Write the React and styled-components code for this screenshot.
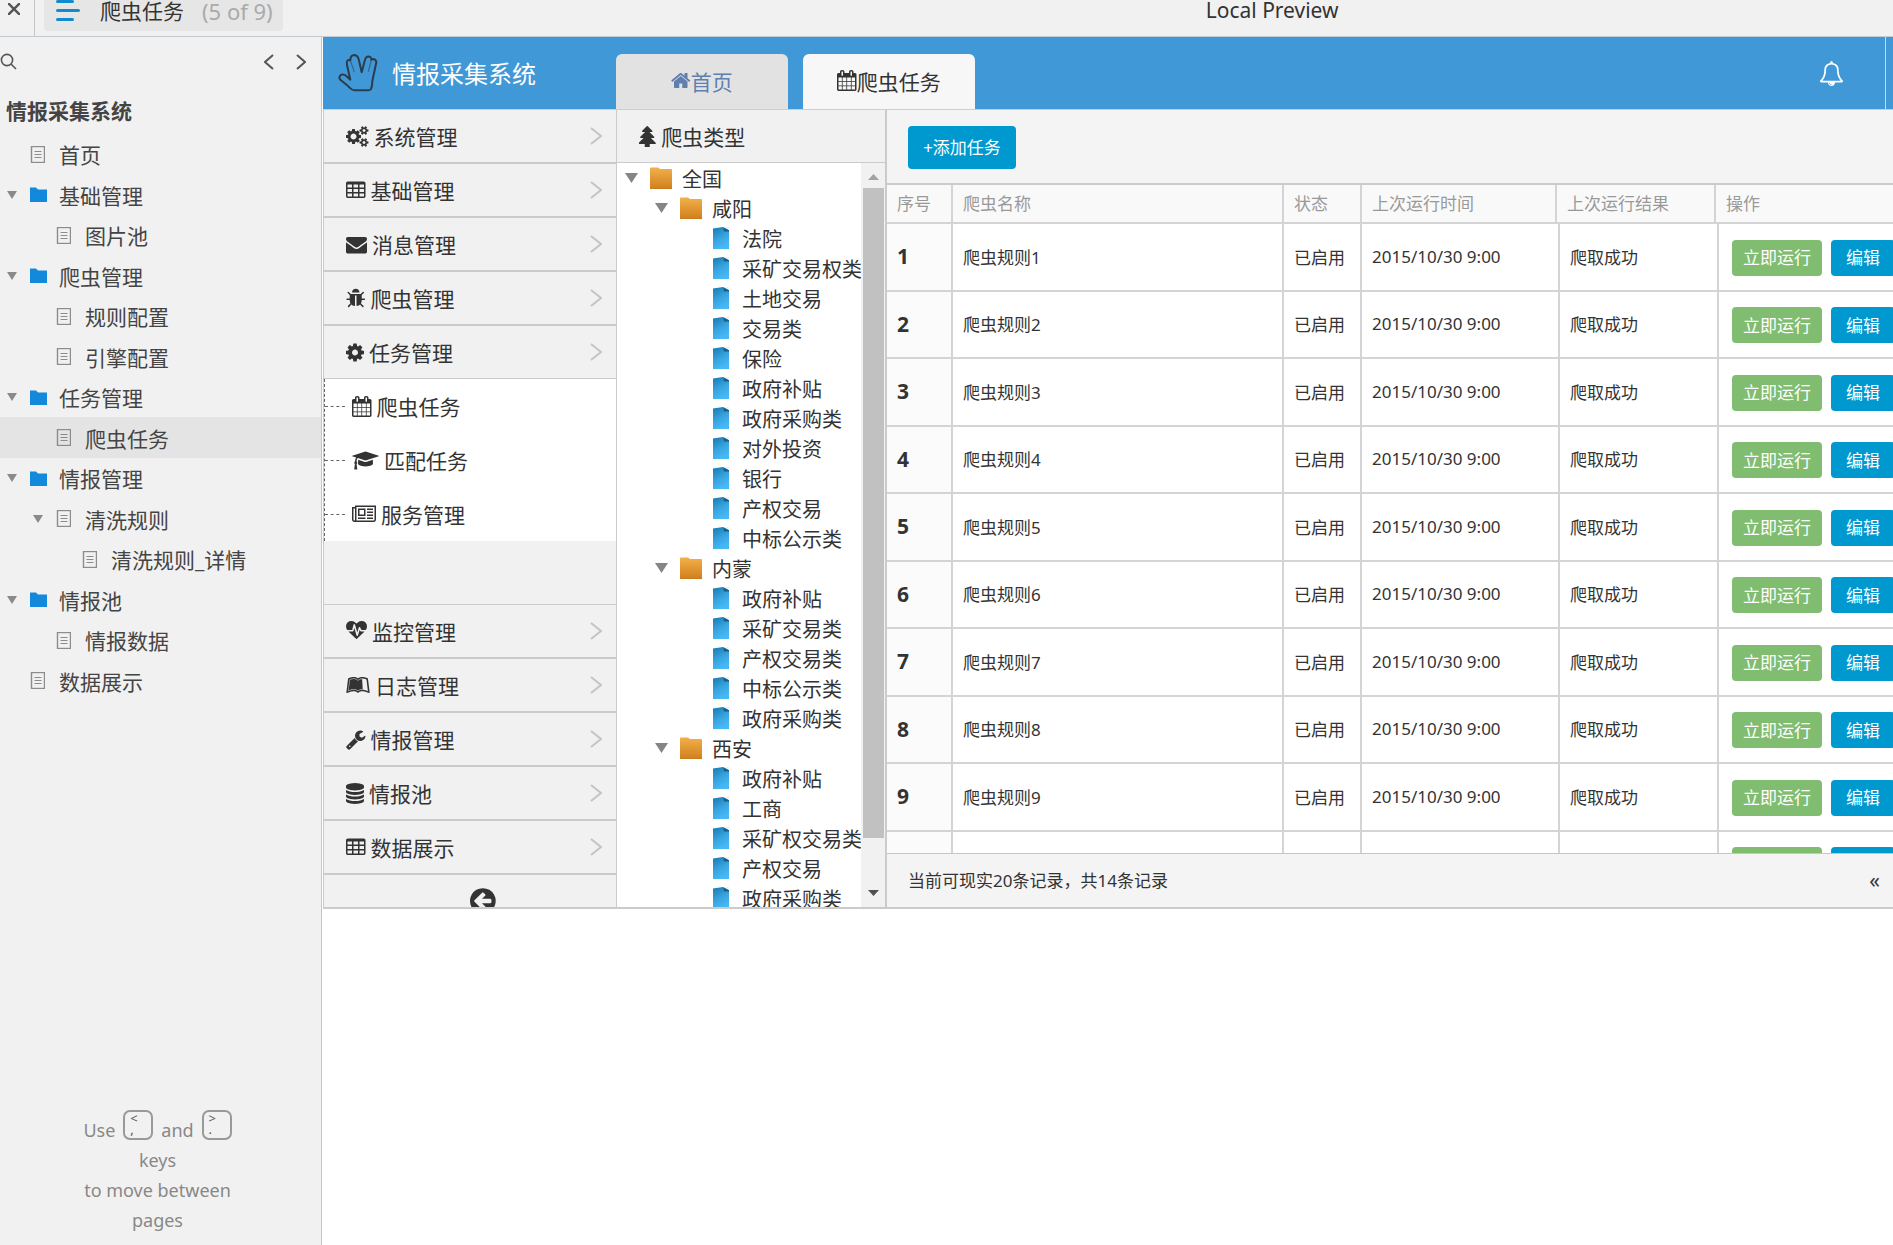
import React, { useState } from 'react';
import styled, { createGlobalStyle, css } from 'styled-components';
import { FaLeanpub } from 'react-icons/fa';

const COLORS = {
  blue: '#4098d7',
  button: '#0099cf',
  green: '#80bd70',
  panel: '#f1f1f1',
  line: '#cbcbcb',
  text: '#333333',
  muted: '#999999',
};

const cell = (x, y) => `M${x} ${y}v-192q0-14-9-23t-23-9h-320q-14 0-23 9t-9 23v192q0 14 9 23t23 9h320q14 0 23-9t9-23z`;
const gridCells = [576, 1088, 1600].map((x) => [608, 992, 1376].map((y) => cell(x, y)).join('')).join('');

// [min x, width, path], every glyph stands on an em of 1792 units
const GLYPHS = {
  cogs: [0, 1920, 'M896 896q0-106-75-181t-181-75-181 75-75 181 75 181 181 75 181-75 75-181zm768 512q0-52-38-90t-90-38-90 38-38 90q0 53 37.5 90.5t90.5 37.5 90.5-37.5 37.5-90.5zm0-1024q0-52-38-90t-90-38-90 38-38 90q0 53 37.5 90.5t90.5 37.5 90.5-37.5 37.5-90.5zm-384 421v185q0 10-7 19.5t-16 10.5l-155 24q-11 35-32 76 34 48 90 115 7 11 7 20 0 12-7 19-23 30-82.5 89.5t-78.5 59.5q-11 0-21-7l-115-90q-37 19-77 31-11 108-23 155-7 24-30 24h-186q-11 0-20-7.5t-10-17.5l-23-153q-34-10-75-31l-118 89q-7 7-20 7-11 0-21-8-144-133-144-160 0-9 7-19 10-14 41-53t47-61q-23-44-35-82l-152-24q-10-1-17-9.5t-7-19.5v-185q0-10 7-19.5t16-10.5l155-24q11-35 32-76-34-48-90-115-7-11-7-20 0-12 7-20 22-30 82-89t79-59q11 0 21 7l115 90q34-18 77-32 11-108 23-154 7-24 30-24h186q11 0 20 7.5t10 17.5l23 153q34 10 75 31l118-89q8-7 20-7 11 0 21 8 144 133 144 160 0 8-7 19-12 16-42 54t-45 60q23 48 34 82l152 23q10 2 17 10.5t7 19.5zm640 533v140q0 16-149 31-12 27-30 52 51 113 51 138 0 4-4 7-122 71-124 71-8 0-46-47t-52-68q-20 2-30 2t-30-2q-14 21-52 68t-46 47q-2 0-124-71-4-3-4-7 0-25 51-138-18-25-30-52-149-15-149-31v-140q0-16 149-31 13-29 30-52-51-113-51-138 0-4 4-7 4-2 35-20t59-34 30-16q8 0 46 46.5t52 67.5q20-2 30-2t30 2q51-71 92-112l6-2q4 0 124 70 4 3 4 7 0 25-51 138 17 23 30 52 149 15 149 31zm0-1024v140q0 16-149 31-12 27-30 52 51 113 51 138 0 4-4 7-122 71-124 71-8 0-46-47t-52-68q-20 2-30 2t-30-2q-14 21-52 68t-46 47q-2 0-124-71-4-3-4-7 0-25 51-138-18-25-30-52-149-15-149-31v-140q0-16 149-31 13-29 30-52-51-113-51-138 0-4 4-7 4-2 35-20t59-34 30-16q8 0 46 46.5t52 67.5q20-2 30-2t30 2q51-71 92-112l6-2q4 0 124 70 4 3 4 7 0 25-51 138 17 23 30 52 149 15 149 31z'],
  table: [64, 1664, `${gridCells}M1728 288v1088q0 66-47 113t-113 47h-1344q-66 0-113-47t-47-113v-1088q0-66 47-113t113-47h1344q66 0 113 47t47 113z`],
  envelope: [0, 1792, 'M1792 710v794q0 66-47 113t-113 47h-1472q-66 0-113-47t-47-113v-794q44 49 101 87 362 246 497 345 57 42 92.5 65.5t94.5 48 110 24.5h2q51 0 110-24.5t94.5-48 92.5-65.5q170-123 498-345 57-39 100-87zm0-294q0 79-49 151t-122 123q-376 261-468 325-10 7-42.5 31t-54 38.5-52 32.5-57.5 27-50 9h-2q-23 0-50-9t-57.5-27-52-32.5-54-38.5-42.5-31q-91-64-262-182.5t-205-142.5q-62-42-117-115.5t-55-136.5q0-78 41.5-130t118.5-52h1472q65 0 112.5 47t47.5 113z'],
  bug: [64, 1664, 'M1696 960q0 26-19 45t-45 19h-224q0 171-67 290l208 209q19 19 19 45t-19 45q-18 19-45 19t-45-19l-198-197q-5 5-15 13t-42 28.5-65 36.5-82 29-97 13v-896h-128v896q-51 0-101.5-13.5t-87-33-66-39-43.5-32.5l-15-14-183 207q-20 21-48 21-24 0-43-16-19-18-20.5-44.5t15.5-46.5l202-227q-58-114-58-274h-224q-26 0-45-19t-19-45 19-45 45-19h224v-294l-173-173q-19-19-19-45t19-45 45-19 45 19l173 173h844l173-173q19-19 45-19t45 19 19 45-19 45l-173 173v294h224q26 0 45 19t19 45zm-480-576h-640q0-133 93.5-226.5t226.5-93.5 226.5 93.5 93.5 226.5z'],
  cog: [128, 1536, 'M1152 896q0-106-75-181t-181-75-181 75-75 181 75 181 181 75 181-75 75-181zm512-109v222q0 12-8 23t-20 13l-185 28q-19 54-39 91 35 50 107 138 10 12 10 25t-9 23q-27 37-99 108t-94 71q-12 0-26-9l-138-108q-44 23-91 38-16 136-29 186-7 28-36 28h-222q-14 0-24.5-8.5t-11.5-21.5l-28-184q-49-16-90-37l-141 107q-10 9-25 9-14 0-25-11-126-114-165-168-7-10-7-23 0-12 8-23 15-21 51-66.5t54-70.5q-27-50-41-99l-183-27q-13-2-21-12.5t-8-23.5v-222q0-12 8-23t19-13l186-28q14-46 39-92-40-57-107-138-10-12-10-24 0-10 9-23 26-36 98.5-107.5t94.5-71.5q13 0 26 10l138 107q44-23 91-38 16-136 29-186 7-28 36-28h222q14 0 24.5 8.5t11.5 21.5l28 184q49 16 90 37l142-107q9-9 24-9 13 0 25 10 129 119 165 170 7 8 7 22 0 12-8 23-15 21-51 66.5t-54 70.5q26 50 41 98l183 28q13 2 21 12.5t8 23.5z'],
  calendar: [64, 1664, 'M192 1664h288v-288h-288v288zm352 0h320v-288h-320v288zm-352-352h288v-320h-288v320zm352 0h320v-320h-320v320zm-352-384h288v-288h-288v288zm736 736h320v-288h-320v288zm-384-736h320v-288h-320v288zm768 736h288v-288h-288v288zm-384-352h320v-320h-320v320zm-352-864v-288q0-13-9.5-22.5t-22.5-9.5h-64q-13 0-22.5 9.5t-9.5 22.5v288q0 13 9.5 22.5t22.5 9.5h64q13 0 22.5-9.5t9.5-22.5zm736 864h288v-320h-288v320zm-384-384h320v-288h-320v288zm384 0h288v-288h-288v288zm32-480v-288q0-13-9.5-22.5t-22.5-9.5h-64q-13 0-22.5 9.5t-9.5 22.5v288q0 13 9.5 22.5t22.5 9.5h64q13 0 22.5-9.5t9.5-22.5zm384-64v1280q0 52-38 90t-90 38h-1408q-52 0-90-38t-38-90v-1280q0-52 38-90t90-38h128v-96q0-66 47-113t113-47h64q66 0 113 47t47 113v96h384v-96q0-66 47-113t113-47h64q66 0 113 47t47 113v96h128q52 0 90 38t38 90z'],
  graduation: [0, 2304, 'M1774 836l18 316q4 69-82 128t-235 93.5-323 34.5-323-34.5-235-93.5-82-128l18-316 574 181q22 7 48 7t48-7zm530-324q0 23-22 31l-1120 352q-4 1-10 1t-10-1l-652-206q-43 34-71 111.5t-34 178.5q63 36 63 109 0 69-58 107l58 433q2 14-8 25-9 11-24 11h-192q-15 0-24-11-10-11-8-25l58-433q-58-38-58-107 0-73 65-111 11-207 98-330l-333-104q-22-8-22-31t22-31l1120-352q4-1 10-1t10 1l1120 352q22 8 22 31z'],
  newspaper: [0, 2048, 'M1024 512h-384v384h384v-384zm128 640v128h-640v-128h640zm0-768v640h-640v-640h640zm640 768v128h-512v-128h512zm0-256v128h-512v-128h512zm0-256v128h-512v-128h512zm0-256v128h-512v-128h512zm-1536 960v-960h-128v960q0 26 19 45t45 19 45-19 19-45zm1664 0v-1088h-1536v1088q0 33-11 64h1483q26 0 45-19t19-45zm128-1216v1216q0 80-56 136t-136 56h-1664q-80 0-136-56t-56-136v-1088h256v-128h1792z'],
  heartbeat: [0, 1792, 'M1280 896h305q-5 6-10 10.5t-9 7.5l-3 4-623 600q-18 18-44 18t-44-18l-624-602q-5-2-21-20h369q22 0 39.5-13.5t22.5-34.5l70-281 190 667q6 20 23 33t39 13q21 0 38-13t23-33l146-485 56 112q18 35 57 35zm512-428q0 145-103 300h-369l-111-221q-8-17-25.5-27t-36.5-8q-45 5-56 46l-129 430-196-686q-6-20-23.5-33t-39.5-13-39 13.5-22 34.5l-116 464h-423q-103-155-103-300 0-220 127-344t351-124q62 0 126.5 21.5t120 58 95.5 68.5 76 68q36-36 76-68t95.5-68.5 120-58 126.5-21.5q224 0 351 124t127 344z'],
  wrench: [64, 1664, 'M448 1472q0-26-19-45t-45-19-45 19-19 45 19 45 45 19 45-19 19-45zm644-420l-682 682q-37 37-90 37-52 0-91-37l-106-108q-38-36-38-90 0-53 38-91l681-681q39 98 114.5 173.5t173.5 114.5zm634-435q0 39-23 106-47 134-164.5 217.5t-258.5 83.5q-185 0-316.5-131.5t-131.5-316.5 131.5-316.5 316.5-131.5q58 0 121.5 16.5t107.5 46.5q16 11 16 28t-16 28l-293 169v224l193 107q5-3 79-48.5t135.5-81 70.5-35.5q15 0 23.5 10t8.5 25z'],
  database: [128, 1536, 'M896 768q237 0 443-43t325-127v170q0 69-103 128t-280 93.5-385 34.5-385-34.5-280-93.5-103-128v-170q119 84 325 127t443 43zm0 768q237 0 443-43t325-127v170q0 69-103 128t-280 93.5-385 34.5-385-34.5-280-93.5-103-128v-170q119 84 325 127t443 43zm0-384q237 0 443-43t325-127v170q0 69-103 128t-280 93.5-385 34.5-385-34.5-280-93.5-103-128v-170q119 84 325 127t443 43zm0-1152q208 0 385 34.5t280 93.5 103 128v128q0 69-103 128t-280 93.5-385 34.5-385-34.5-280-93.5-103-128v-128q0-69 103-128t280-93.5 385-34.5z'],
  arrowLeft: [128, 1536, 'M1408 960v-128q0-26-19-45t-45-19h-502l189-189q19-19 19-45t-19-45l-91-91q-18-18-45-18t-45 18l-362 362-91 91q-18 18-18 45t18 45l91 91 362 362q18 18 45 18t45-18l91-91q18-18 18-45t-18-45l-189-189h502q26 0 45-19t19-45zm256-64q0 209-103 385.5t-279.5 279.5-385.5 103-385.5-103-279.5-279.5-103-385.5 103-385.5 279.5-279.5 385.5-103 385.5 103 279.5 279.5 103 385.5z'],
  home: [64, 1664, 'M1472 992v480q0 26-19 45t-45 19h-384v-384h-256v384h-384q-26 0-45-19t-19-45v-480q0-1 .5-3t.5-3l575-474 575 474q1 2 1 6zm223-69l-62 74q-8 9-21 11h-3q-13 0-21-7l-692-577-692 577q-12 8-24 7-13-2-21-11l-62-74q-8-10-7-23.5t11-21.5l719-599q32-26 76-26t76 26l244 204v-195q0-14 9-23t23-9h192q14 0 23 9t9 23v408l219 182q10 8 11 21.5t-7 23.5z'],
  tree: [160, 1472, 'M1600 1472q0 26-19 45t-45 19h-462q1 17 6 87.5t5 108.5q0 25-18 42.5t-43 17.5h-320q-25 0-43-17.5t-18-42.5q0-38 5-108.5t6-87.5h-462q-26 0-45-19t-19-45 19-45l402-403h-229q-26 0-45-19t-19-45 19-45l402-403h-197q-26 0-45-19t-19-45 19-45l384-384q19-19 45-19t45 19l384 384q19 19 19 45t-19 45-45 19h-197l402 403q19 19 19 45t-19 45-45 19h-229l402 403q19 19 19 45z'],
  bell: [0, 1792, 'M912 1696q0-16-16-16-59 0-101.5-42.5t-42.5-101.5q0-16-16-16t-16 16q0 73 51.5 124.5t124.5 51.5q16 0 16-16zm-666-288h1300q-266-300-266-832 0-51-24-105t-69-103-121.5-80.5-169.5-31.5-169.5 31.5-121.5 80.5-69 103-24 105q0 532-266 832zm1482 0q0 52-38 90t-90 38h-448q0 106-75 181t-181 75-181-75-75-181h-448q-52 0-90-38t-38-90q50-42 91-88t85-119.5 74.5-158.5 50-206 19.5-260q0-152 117-282.5t307-158.5q-8-19-8-39 0-40 28-68t68-28 68 28 28 68q0 20-8 39 190 28 307 158.5t117 282.5q0 139 19.5 260t50 206 74.5 158.5 85 119.5 91 88z'],
};

const Glyph = ({ name, size = 21 }) => {
  if (name === 'leanpub') {
    return <FaLeanpub size={24} aria-hidden="true" />;
  }
  const [x, width, d] = GLYPHS[name];
  return (
    <svg viewBox={`${x} 0 ${width} 1792`} width={(width / 1792) * size} height={size} fill="currentColor" fillRule="evenodd" aria-hidden="true">
      <path d={d} />
    </svg>
  );
};

const GlobalStyle = createGlobalStyle`
  * {
    box-sizing: border-box;
  }

  body {
    margin: 0;
    overflow: hidden;
    background: #ffffff;
    color: ${COLORS.text};
    font-family: "Noto Sans", "Noto Sans CJK SC", sans-serif;
    font-size: 21px;
    white-space: nowrap;
  }

  ul {
    margin: 0;
    padding: 0;
    list-style: none;
  }

  a {
    color: inherit;
    text-decoration: none;
  }

  button {
    margin: 0;
    padding: 0;
    border: 0;
    background: none;
    color: inherit;
    font: inherit;
    cursor: pointer;
  }

  svg {
    display: block;
    flex: none;
  }
`;

const Page = styled.div`
  display: flex;
  flex-direction: column;
  height: 100vh;
`;

const TopBar = styled.header`
  display: flex;
  height: 37px;
  flex: none;
  background: ${COLORS.panel};
  border-bottom: 1px solid #c3cbd2;
`;

const CloseButton = styled.button`
  display: flex;
  width: 35px;
  padding: 3px 0 0 8px;
  border-right: 1px solid #c6c6c6;
`;

const PagePill = styled.button`
  display: flex;
  height: 31px;
  margin-left: 9px;
  padding: 0 10px 0 12px;
  border-radius: 0 0 4px 4px;
  background: #e6e6e6;
  line-height: 22px;
`;

const PageName = styled.span`
  margin: 0 18px 0 20px;
`;

const PageCount = styled.span`
  color: #aaaaaa;
  font-size: 22px;
`;

const PreviewTitle = styled.div`
  flex: 1;
  padding-left: 923px;
  line-height: 20px;
`;

const Main = styled.div`
  display: flex;
  flex: 1;
  min-height: 0;
`;

const Sidebar = styled.aside`
  display: flex;
  flex-direction: column;
  flex: none;
  width: 322px;
  background: ${COLORS.panel};
  border-right: 1px solid #c6c6c6;
`;

const SidebarTools = styled.div`
  display: flex;
  gap: 22px;
  align-items: center;
  height: 49px;
  padding-right: 15px;
`;

const SearchButton = styled.button`
  margin-right: auto;
`;

const ProjectName = styled.h1`
  margin: 0;
  padding: 10px 0 8px 6px;
  color: #444444;
  font-size: 21px;
  font-weight: 700;
  line-height: 30px;
`;

const PageItem = styled.li`
  display: flex;
  align-items: center;
  height: ${(props) => (props.$tall ? 41 : 40)}px;
  padding-left: ${(props) => 5 + props.$level * 26}px;
  background: ${(props) => (props.$active ? '#e4e4e4' : 'transparent')};
  color: #444444;
`;

const PageLink = styled.a`
  display: flex;
  align-items: center;
`;

const PageIcon = styled.span`
  width: 29px;
`;

const Caret = styled.button`
  width: 25px;
  height: 20px;
  padding-left: 2px;
`;

const KeyHint = styled.p`
  margin: auto 0 10px;
  padding-right: 6px;
  color: #888888;
  font-size: 18px;
  line-height: 30px;
  text-align: center;
`;

const HintLine = styled.span`
  display: flex;
  justify-content: center;
  gap: 8px;
`;

const Key = styled.kbd`
  display: flex;
  flex-direction: column;
  width: 30px;
  height: 30px;
  margin: -5px 0 5px;
  padding: 1px 5px;
  border: 2px solid #999999;
  border-radius: 7px;
  color: #555555;
  font-family: "Noto Sans", sans-serif;
  font-size: 13px;
  line-height: 11px;
  text-align: left;
`;

const Preview = styled.main`
  display: flex;
  flex-direction: column;
  flex: 1;
  min-width: 0;
  margin-left: 1px;
`;

const AppHeader = styled.header`
  display: flex;
  align-items: flex-end;
  flex: none;
  height: 73px;
  background: ${COLORS.blue};
  border-bottom: 1px solid #bcd3e5;
`;

const Brand = styled.div`
  display: flex;
  align-items: center;
  gap: 13px;
  align-self: stretch;
  width: 293px;
  padding: 0 0 2px 14px;
  color: #ffffff;
  font-size: 24px;
`;

const Tab = styled.button`
  display: flex;
  align-items: center;
  justify-content: center;
  width: 172px;
  height: 55px;
  margin-right: 15px;
  padding-bottom: 2px;
  border-radius: 6px 6px 0 0;
  background: ${(props) => (props.$active ? '#f7f7f7' : '#e2e2e2')};
  color: ${(props) => (props.$active ? COLORS.text : '#5f7fae')};
`;

const HeaderEnd = styled.div`
  display: flex;
  align-items: center;
  align-self: stretch;
  margin-left: auto;
  margin-right: 7px;
  padding-right: 41px;
  border-right: 1px solid #c3dcef;
  color: #ffffff;
`;

const Workspace = styled.div`
  display: flex;
  flex: none;
  height: 799px;
  border-bottom: 2px solid ${COLORS.line};
`;

const Menu = styled.nav`
  flex: none;
  width: 294px;
  overflow: hidden;
  background: ${COLORS.panel};
  border: solid ${COLORS.line};
  border-width: 0 1px;
`;

const MenuItem = styled.button`
  display: flex;
  align-items: center;
  gap: 5px;
  width: 100%;
  height: ${(props) => (props.$open ? 53 : 54)}px;
  padding: 0 14px 0 22px;
  border-bottom: ${(props) => (props.$open ? 1 : 2)}px solid ${COLORS.line};
`;

const MenuArrow = styled.span`
  margin-left: auto;
`;

const SubMenu = styled.ul`
  background: #ffffff;
  border-left: 1px dashed #666666;
`;

const SubItem = styled.li`
  display: flex;
  align-items: center;
  gap: 7px;
  height: 54px;
`;

const Branch = styled.span`
  width: 20px;
  border-top: 1px dashed #666666;
`;

const SubLink = styled.a`
  display: flex;
  align-items: center;
  gap: 5px;
`;

const MenuGap = styled.div`
  height: 64px;
  border-bottom: 1px solid ${COLORS.line};
`;

const CollapseButton = styled.button`
  display: flex;
  justify-content: center;
  width: 100%;
  padding-top: 11px;
  padding-left: 26px;
`;

const TreePanel = styled.section`
  display: flex;
  flex-direction: column;
  flex: none;
  width: 270px;
  border-right: 2px solid ${COLORS.line};
`;

const TreeTitle = styled.h2`
  display: flex;
  align-items: center;
  gap: 5px;
  flex: none;
  height: 53px;
  margin: 0;
  padding-left: 22px;
  background: ${COLORS.panel};
  border-bottom: 1px solid ${COLORS.line};
  font-size: 21px;
  font-weight: 400;
`;

const TreeScroll = styled.div`
  display: grid;
  grid-template-columns: 1fr 24px;
  flex: 1;
  min-height: 0;
`;

const Tree = styled.ul`
  overflow: hidden;
`;

const TreeNode = styled.li`
  display: flex;
  align-items: center;
  height: 30px;
  padding-left: ${(props) => 6 + props.$level * 30}px;
  font-size: 20px;
`;

const TreeLink = styled.a`
  display: flex;
  align-items: center;
`;

const TreeIcon = styled.span`
  flex: none;
  width: 32px;
  padding-left: ${(props) => (props.$leaf ? 3 : 0)}px;
`;

const TreeCaret = styled.span`
  flex: none;
  width: 27px;
  padding-left: 2px;
`;

const ScrollTrack = styled.div`
  display: flex;
  flex-direction: column;
  align-items: center;
  justify-content: space-between;
  background: #f1f1f1;
`;

const ScrollThumb = styled.div`
  flex: 1;
  align-self: stretch;
  margin: 8px 1px 50px 2px;
  background: #c1c1c1;
`;

const ScrollArrow = styled.button`
  height: 9px;
  padding-top: ${(props) => (props.$down ? 0 : 2)}px;
  margin: ${(props) => (props.$down ? '0 0 10px' : '8px 0 0')};
`;

const TaskPanel = styled.section`
  display: flex;
  flex-direction: column;
  flex: 1;
  min-width: 0;
`;

const Toolbar = styled.div`
  flex: none;
  height: 75px;
  padding: 16px 21px;
  background: #f4f4f4;
  border-bottom: 2px solid ${COLORS.line};
`;

const ActionButton = styled.button`
  flex: none;
  height: 36px;
  padding-bottom: 2px;
  border-radius: 4px;
  background: ${COLORS.button};
  color: #ffffff;
  font-size: 17px;

  ${(props) => props.$kind === 'add' && css`
    width: 108px;
    height: 43px;
  `}

  ${(props) => props.$kind === 'run' && css`
    width: 90px;
    background: ${COLORS.green};
  `}

  ${(props) => props.$kind === 'edit' && css`
    width: 64px;
  `}
`;

const Table = styled.table`
  width: 100%;
  table-layout: fixed;
  border-collapse: separate;
  border-spacing: 0;
  font-size: 17px;
`;

const HeadCell = styled.th`
  height: 39px;
  padding: 0 0 2px 10px;
  background: #f9f9f9;
  border: solid #d4d4d4;
  border-width: 0 2px 2px 0;
  color: ${COLORS.muted};
  font-weight: 400;
  text-align: left;

  &:last-child {
    border-right: 0;
  }
`;

const TableBody = styled.div`
  flex: 1;
  min-height: 0;
  overflow: hidden;
`;

const Row = styled.tr`
  height: ${(props) => (props.$tall ? 68 : 67)}px;
`;

const Cell = styled.td`
  padding: 0 0 2px 10px;
  border: solid #d4d4d4;
  border-width: 0 2px 2px 0;

  &:last-child {
    border-right: 0;
  }
`;

const IndexCell = styled(Cell).attrs({ as: 'th', scope: 'row' })`
  background: #fbfbfb;
  font-size: 21px;
  font-weight: 700;
  text-align: left;
`;

const Actions = styled.div`
  display: flex;
  gap: 9px;
  padding: 3px 0 0 3px;
`;

const TableFooter = styled.footer`
  display: flex;
  align-items: center;
  justify-content: space-between;
  flex: none;
  height: 54px;
  padding: 0 13px 2px 21px;
  background: #f4f4f4;
  border-top: 1px solid #c6c6c6;
  font-size: 17px;
`;

const FirstPageButton = styled.button`
  font-size: 21px;
`;

const PAGES = [
  { name: '首页', level: 0 },
  { name: '基础管理', level: 0, folder: true, open: true },
  { name: '图片池', level: 1 },
  { name: '爬虫管理', level: 0, folder: true, open: true },
  { name: '规则配置', level: 1 },
  { name: '引擎配置', level: 1 },
  { name: '任务管理', level: 0, folder: true, open: true },
  { name: '爬虫任务', level: 1 },
  { name: '情报管理', level: 0, folder: true, open: true },
  { name: '清洗规则', level: 1, open: true },
  { name: '清洗规则_详情', level: 2 },
  { name: '情报池', level: 0, folder: true, open: true },
  { name: '情报数据', level: 1 },
  { name: '数据展示', level: 0 },
];

const MENU_TOP = [
  ['cogs', '系统管理'],
  ['table', '基础管理'],
  ['envelope', '消息管理'],
  ['bug', '爬虫管理'],
  ['cog', '任务管理'],
];

const SUB_MENU = [
  ['calendar', '爬虫任务'],
  ['graduation', '匹配任务'],
  ['newspaper', '服务管理'],
];

const MENU_BOTTOM = [
  ['heartbeat', '监控管理'],
  ['leanpub', '日志管理'],
  ['wrench', '情报管理'],
  ['database', '情报池'],
  ['table', '数据展示'],
];

const REGIONS = [
  ['咸阳', ['法院', '采矿交易权类', '土地交易', '交易类', '保险', '政府补贴', '政府采购类', '对外投资', '银行', '产权交易', '中标公示类']],
  ['内蒙', ['政府补贴', '采矿交易类', '产权交易类', '中标公示类', '政府采购类']],
  ['西安', ['政府补贴', '工商', '采矿权交易类', '产权交易', '政府采购类']],
];

const TASKS = Array.from({ length: 10 }, (_, i) => i + 1);

const Triangle = ({ width = 10, height = 8, color = '#8a8a8a', up }) => (
  <svg width={width} height={height} viewBox="0 0 10 8" preserveAspectRatio="none" fill={color} aria-hidden="true">
    <path d={up ? 'M0 8L5 0L10 8Z' : 'M0 0H10L5 8Z'} />
  </svg>
);

const Chevron = ({ left, width = 10, height = 16, color = '#555555' }) => (
  <svg width={width} height={height} viewBox={`0 0 ${width} ${height}`} fill="none" stroke={color} strokeWidth="2" aria-hidden="true">
    <path d={left ? `M${width - 1} 1L1 ${height / 2}L${width - 1} ${height - 1}` : `M1 1L${width - 1} ${height / 2}L1 ${height - 1}`} />
  </svg>
);

const SpockHand = () => (
  <svg width="42" height="39" viewBox="0 0 126 117" fill="none" stroke="#2b3d4c" strokeLinejoin="round" aria-hidden="true">
    <path
      strokeWidth="6"
      d="M8 70C12 62 22 64 28 69L40 80L30 36C27 24 32 19 40 22C40 10 46 6 53 6C60 7 63 12 65 18L74 58L84 20C86 11 94 8 101 13C103 15 103 18 103 20C110 16 118 20 118 28L106 84C106 96 104 104 102 108C100 111 98 112 94 112H52C44 112 40 106 34 100L12 82C8 79 6 75 8 70Z"
    />
    <path strokeWidth="2" d="M40 22L52 58M103 20L94 56" />
  </svg>
);

const PageDoc = () => (
  <svg width="15" height="17" viewBox="-1 0 15 17" fill="none" stroke="#8c8c8c" aria-hidden="true">
    <rect x="0.5" y="0.5" width="13" height="16" strokeWidth="1.4" />
    <path d="M3.5 5.5h7M3.5 8.5h7M3.5 11.5h7" />
  </svg>
);

const PageFolder = () => (
  <svg width="17" height="15" viewBox="0 0 17 15" fill="#1389dc" aria-hidden="true">
    <path d="M0 0.500H6L8 2.500H17V15H0Z" />
  </svg>
);

const TreeFolder = () => (
  <svg width="22" height="23" viewBox="0 0 22 23" aria-hidden="true">
    <defs>
      <linearGradient id="folder" x1="0" y1="0" x2="0" y2="1">
        <stop offset="0" stopColor="#f2b04a" />
        <stop offset="1" stopColor="#d07f1c" />
      </linearGradient>
    </defs>
    <path d="M0 1.500Q0 0.500 1 0.500H8L10 2H21Q22 2 22 3V22H0Z" fill="url(#folder)" />
    <path d="M0 21.500H22" stroke="#c77a1e" />
  </svg>
);

const TreeDoc = () => (
  <svg width="16" height="22" viewBox="0 0 16 22" aria-hidden="true">
    <defs>
      <linearGradient id="doc" x1="0" y1="0" x2="0.4" y2="1">
        <stop offset="0" stopColor="#1878ae" />
        <stop offset="0.6" stopColor="#38a5e0" />
        <stop offset="1" stopColor="#46b8f5" />
      </linearGradient>
    </defs>
    <path d="M0 1.500L10 0L12 3.500H16V22H0Z" fill="url(#doc)" />
    <path d="M10 0L11 4.500H16V3Z" fill="#17608a" />
    <path d="M11 0L16 3V0Z" fill="#e8f3fa" />
  </svg>
);

const Columns = ({ time, last }) => (
  <colgroup>
    <col width="66" />
    <col />
    <col width="78" />
    <col width={time} />
    <col width="159" />
    <col width={last} />
  </colgroup>
);

const MenuButton = ({ icon, label, open }) => (
  <MenuItem type="button" $open={open}>
    <Glyph name={icon} />
    {label}
    <MenuArrow>
      <Chevron width={12} height={18} color="#c4c4c4" />
    </MenuArrow>
  </MenuItem>
);

const Branches = ({ level, label, leaf }) => (
  <TreeNode $level={level}>
    <TreeCaret>{!leaf && <Triangle width={13} height={10} color="#858585" />}</TreeCaret>
    <TreeLink href="#">
      <TreeIcon $leaf={leaf}>{leaf ? <TreeDoc /> : <TreeFolder />}</TreeIcon>
      {label}
    </TreeLink>
  </TreeNode>
);

const App = () => {
  const [current, setCurrent] = useState(7);

  return (
    <Page>
      <GlobalStyle />
      <TopBar>
        <CloseButton type="button" aria-label="Close">
          <svg width="12" height="12" viewBox="0 0 12 12" stroke="#555555" strokeWidth="2.400" aria-hidden="true">
            <path d="M0 0L12 12M12 0L0 12" />
          </svg>
        </CloseButton>
        <PagePill type="button">
          <svg width="24" height="22" viewBox="0 0 24 22" stroke="#0f8ccb" strokeWidth="3" strokeLinecap="round" aria-hidden="true">
            <path d="M1.500 1.500H16.500M1.500 10.500H22.500M1.500 19.500H16.500" />
          </svg>
          <PageName>{PAGES[current].name}</PageName>
          <PageCount>(5 of 9)</PageCount>
        </PagePill>
        <PreviewTitle>Local Preview</PreviewTitle>
      </TopBar>

      <Main>
        <Sidebar>
          <SidebarTools>
            <SearchButton type="button" aria-label="Search">
              <svg width="17" height="17" viewBox="0 0 17 17" fill="none" stroke="#555555" strokeWidth="1.600" aria-hidden="true">
                <circle cx="7" cy="7" r="5.600" />
                <path d="M11 11L16 16" />
              </svg>
            </SearchButton>
            <button type="button" aria-label="Previous page"><Chevron left /></button>
            <button type="button" aria-label="Next page"><Chevron /></button>
          </SidebarTools>
          <ProjectName>情报采集系统</ProjectName>
          <ul>
            {PAGES.map((page, i) => (
              <PageItem key={i} $level={page.level} $active={i === current} $tall={i % 2 === 1}>
                <Caret type="button" aria-label={page.name} disabled={!page.open}>
                  {page.open && <Triangle />}
                </Caret>
                <PageLink href="#" onClick={() => setCurrent(i)}>
                  <PageIcon>{page.folder ? <PageFolder /> : <PageDoc />}</PageIcon>
                  {page.name}
                </PageLink>
              </PageItem>
            ))}
          </ul>
          <KeyHint>
            <HintLine>
              Use
              <Key><span>&lt;</span><span>,</span></Key>
              and
              <Key><span>&gt;</span><span>.</span></Key>
            </HintLine>
            keys
            <br />
            to move between
            <br />
            pages
          </KeyHint>
        </Sidebar>

        <Preview>
          <AppHeader>
            <Brand>
              <SpockHand />
              情报采集系统
            </Brand>
            <Tab type="button"><Glyph name="home" />首页</Tab>
            <Tab type="button" $active><Glyph name="calendar" />爬虫任务</Tab>
            <HeaderEnd>
              <button type="button" aria-label="消息"><Glyph name="bell" size={25} /></button>
            </HeaderEnd>
          </AppHeader>

          <Workspace>
            <Menu>
              {MENU_TOP.map(([icon, label], i) => (
                <MenuButton key={label} icon={icon} label={label} open={i === MENU_TOP.length - 1} />
              ))}
              <SubMenu>
                {SUB_MENU.map(([icon, label]) => (
                  <SubItem key={label}>
                    <Branch />
                    <SubLink href="#"><Glyph name={icon} />{label}</SubLink>
                  </SubItem>
                ))}
              </SubMenu>
              <MenuGap />
              {MENU_BOTTOM.map(([icon, label]) => (
                <MenuButton key={label} icon={icon} label={label} />
              ))}
              <CollapseButton type="button" aria-label="收起菜单">
                <Glyph name="arrowLeft" size={30} />
              </CollapseButton>
            </Menu>

            <TreePanel>
              <TreeTitle><Glyph name="tree" />爬虫类型</TreeTitle>
              <TreeScroll>
                <Tree>
                  <Branches level={0} label="全国" />
                  {REGIONS.map(([region, types]) => (
                    <React.Fragment key={region}>
                      <Branches level={1} label={region} />
                      {types.map((type) => (
                        <Branches key={type} level={2} label={type} leaf />
                      ))}
                    </React.Fragment>
                  ))}
                </Tree>
                <ScrollTrack>
                  <ScrollArrow type="button" aria-label="向上">
                    <Triangle width={11} height={6} color="#a3a3a3" up />
                  </ScrollArrow>
                  <ScrollThumb />
                  <ScrollArrow type="button" aria-label="向下" $down>
                    <Triangle width={11} height={6} color="#505050" />
                  </ScrollArrow>
                </ScrollTrack>
              </TreeScroll>
            </TreePanel>

            <TaskPanel>
              <Toolbar>
                <ActionButton type="button" $kind="add">+添加任务</ActionButton>
              </Toolbar>
              <Table>
                <Columns time={195} last={177} />
                <thead>
                  <tr>
                    <HeadCell>序号</HeadCell>
                    <HeadCell>爬虫名称</HeadCell>
                    <HeadCell>状态</HeadCell>
                    <HeadCell>上次运行时间</HeadCell>
                    <HeadCell>上次运行结果</HeadCell>
                    <HeadCell>操作</HeadCell>
                  </tr>
                </thead>
              </Table>
              <TableBody>
                <Table>
                  <Columns time={198} last={174} />
                  <tbody>
                    {TASKS.map((n, i) => (
                      <Row key={n} $tall={i % 2 === 0}>
                        <IndexCell>{n}</IndexCell>
                        <Cell>爬虫规则{n}</Cell>
                        <Cell>已启用</Cell>
                        <Cell>2015/10/30 9:00</Cell>
                        <Cell>爬取成功</Cell>
                        <Cell>
                          <Actions>
                            <ActionButton type="button" $kind="run">立即运行</ActionButton>
                            <ActionButton type="button" $kind="edit">编辑</ActionButton>
                          </Actions>
                        </Cell>
                      </Row>
                    ))}
                  </tbody>
                </Table>
              </TableBody>
              <TableFooter>
                <span>当前可现实20条记录，共14条记录</span>
                <FirstPageButton type="button" aria-label="首页">«</FirstPageButton>
              </TableFooter>
            </TaskPanel>
          </Workspace>
        </Preview>
      </Main>
    </Page>
  );
};

export default App;
